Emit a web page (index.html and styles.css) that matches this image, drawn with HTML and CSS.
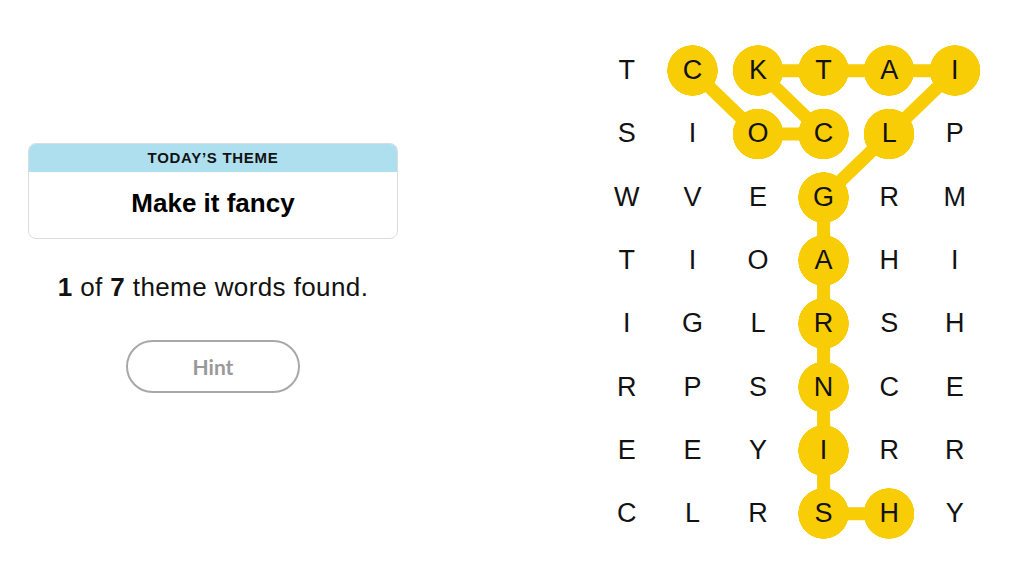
FILE: index.html
```html
<!DOCTYPE html>
<html>
<head>
<meta charset="utf-8">
<link rel="stylesheet" href="styles.css">
</head>
<body>
<div class="page">
  <section class="side">
    <div class="theme-card">
      <div class="theme-head">TODAY’S THEME</div>
      <div class="theme-body">Make it fancy</div>
    </div>
    <p class="progress"><b>1</b> of <b>7</b> theme words found.</p>
    <button class="hint">Hint</button>
  </section>
  <section class="board">
    <svg class="links" width="394" height="507" viewBox="0 0 394 507">
      <g stroke="#f8cd05" stroke-width="13" stroke-linecap="round" fill="none">
        <polyline points="98.4,31.65 164,94.95 229.6,94.95 164,31.65 360.8,31.65 295.2,94.95 229.6,158.25 229.6,474.75 295.2,474.75"/>
      </g>
    </svg>
    <div class="grid">
      <span>T</span><span class="on">C</span><span class="on">K</span><span class="on">T</span><span class="on">A</span><span class="on">I</span>
      <span>S</span><span>I</span><span class="on">O</span><span class="on">C</span><span class="on">L</span><span>P</span>
      <span>W</span><span>V</span><span>E</span><span class="on">G</span><span>R</span><span>M</span>
      <span>T</span><span>I</span><span>O</span><span class="on">A</span><span>H</span><span>I</span>
      <span>I</span><span>G</span><span>L</span><span class="on">R</span><span>S</span><span>H</span>
      <span>R</span><span>P</span><span>S</span><span class="on">N</span><span>C</span><span>E</span>
      <span>E</span><span>E</span><span>Y</span><span class="on">I</span><span>R</span><span>R</span>
      <span>C</span><span>L</span><span>R</span><span class="on">S</span><span class="on">H</span><span>Y</span>
    </div>
  </section>
</div>
</body>
</html>
```

FILE: styles.css
```css
* { box-sizing: border-box; }
html, body { margin: 0; padding: 0; background: #fff; }
body { font-family: "Liberation Sans", Arial, sans-serif; color: #121212; }
.page {
  display: flex;
  width: 1024px;
  height: 576px;
  padding-top: 39px;
}
.side {
  width: 370px;
  margin-left: 28px;
  padding-top: 104px;
  display: flex;
  flex-direction: column;
  align-items: center;
}
.theme-card {
  width: 370px;
  border: 1px solid #dcdcdc;
  border-radius: 8px;
  overflow: hidden;
}
.theme-head {
  background: #aedfee;
  height: 28px;
  line-height: 28px;
  text-align: center;
  font-family: "Liberation Sans", Arial, sans-serif;
  font-weight: 700;
  font-size: 15px;
  letter-spacing: 0.7px;
  color: #121212;
}
.theme-body {
  height: 66px;
  line-height: 62px;
  text-align: center;
  font-weight: 700;
  font-size: 26px;
  color: #000;
}
.progress {
  margin: 33px 0 0;
  font-family: "Liberation Sans", Arial, sans-serif;
  font-size: 26px;
  letter-spacing: 0.4px;
  line-height: 30px;
  color: #121212;
}
.progress b { font-weight: 700; }
.hint {
  margin-top: 38px;
  width: 174px;
  height: 53px;
  border: 2px solid #a8a8a8;
  border-radius: 27px;
  background: #fff;
  color: #999;
  font-family: Lato, "Liberation Sans", sans-serif;
  font-weight: 700;
  font-size: 21px;
  padding: 0;
}
.board {
  position: relative;
  margin-left: 196px;
  width: 394px;
  height: 507px;
}
.links {
  position: absolute;
  left: 0;
  top: 0;
}
.grid {
  position: relative;
  display: grid;
  grid-template-columns: repeat(6, 65.6px);
  grid-template-rows: repeat(8, 63.3px);
}
.grid span {
  display: flex;
  align-items: center;
  justify-content: center;
  font-size: 27px;
  color: #121212;
}
.grid span.on {
  background: radial-gradient(circle at center, #f8cd05 0, #f8cd05 25px, transparent 25.5px);
}
```
